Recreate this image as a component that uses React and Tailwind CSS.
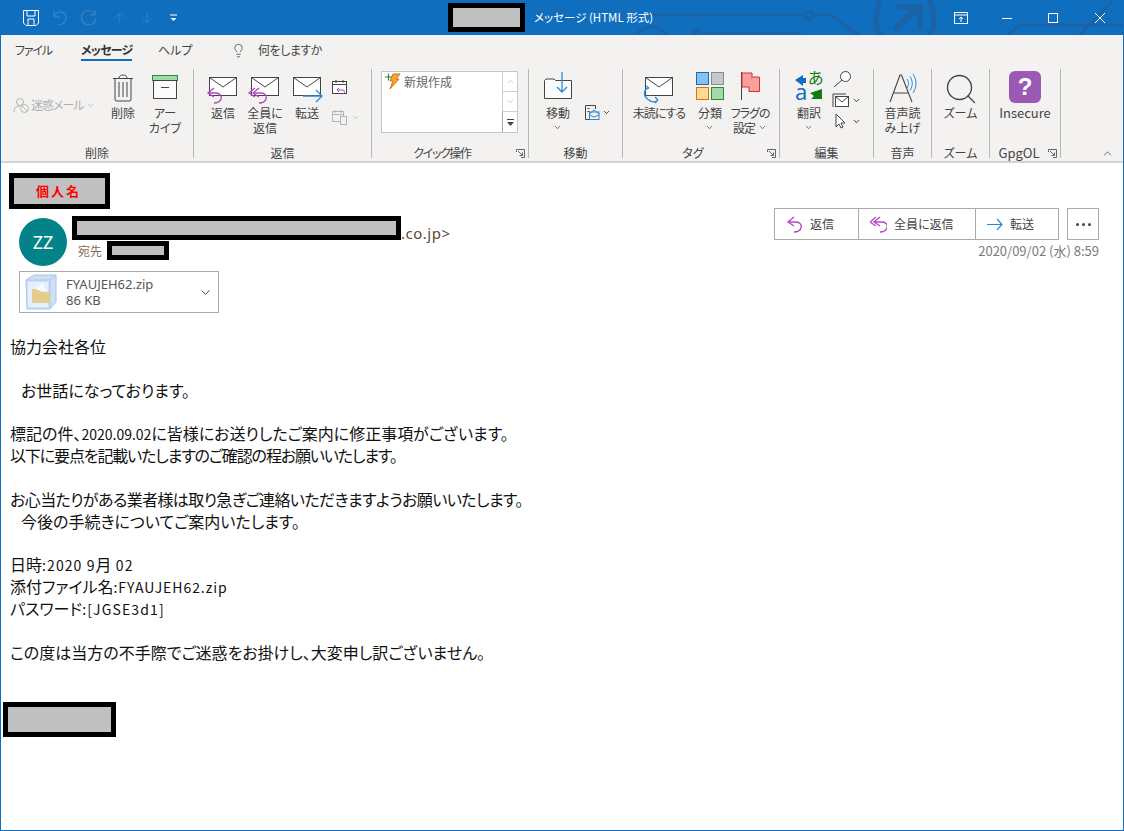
import { ChevronDown, ChevronUp, Lightbulb, Search, ArrowUp, ArrowDown } from "lucide-react"

const jp = "font-['Noto_Sans_CJK_JP','Noto_Sans',sans-serif]"

function Redacted({ className, children }) {
  return (
    <div className={"border-[5px] border-black bg-[#c0c0c0] flex items-center justify-center shrink-0 " + className}>
      {children}
    </div>
  )
}

function Arrow({ color, double, x = 0, y = 0 }) {
  return (
    <g transform={`translate(${x} ${y})`} fill="none" stroke={color} strokeWidth="1.3">
      <path d="M7 1 L1 6 L7 10" />
      {double && <path d="M3 1 L-3 6 L3 10" />}
      <path d="M1 6 H9 C13 6 15 9 14 12 C13 15 10 16 7 16" />
    </g>
  )
}

function MailIcon({ kind }) {
  return (
    <svg width="38" height="34" viewBox="0 0 38 34" fill="none">
      <rect x="5.5" y="7.5" width="27" height="18" fill="#fff" stroke="#444" />
      <path d="M5.5 7.5 L19 17 L32.5 7.5" stroke="#444" />
      {kind === "reply" && <Arrow color="#b146c2" x="3" y="17" />}
      {kind === "all" && <Arrow color="#b146c2" double x="6" y="17" />}
      {kind === "forward" && <path d="M15 26 H34 M28 20 L34 26 L28 32" stroke="#2b88d8" strokeWidth="1.3" />}
      {kind === "unread" && <path d="M9 30 C3 27 3 19 9 18 M9 18 L6 16 M9 30 C12 33 16 32 18 30 M18 30 L15 27 M18 30 L15 33" stroke="#2b88d8" strokeWidth="1.3" />}
    </svg>
  )
}

function Big({ w, icon, lines, chevron, textClass }) {
  return (
    <div className={"flex flex-col items-center shrink-0 " + w}>
      <div className="h-[36px] flex items-center justify-center">{icon}</div>
      <div className={"text-center leading-[15px] text-[#444] " + (textClass || "")}>
        {lines.map((l, i) => <div key={i} className="whitespace-nowrap flex items-center justify-center">{l}</div>)}
        {chevron && <ChevronDown size={9} strokeWidth={2} className="mx-auto mt-[3px]" />}
      </div>
    </div>
  )
}

function Group({ w, label, labelClass, launcher, children }) {
  return (
    <div className={"relative shrink-0 h-[89px] flex flex-col border-r border-[#b8b8b8] " + w}>
      <div className="flex-1 flex items-start">{children}</div>
      <div className={"h-[15px] text-center leading-[15px] text-[#444] mb-[-2px] " + (labelClass || "")}>{label}</div>
      {launcher && (
        <svg className="absolute right-[3px] bottom-[0px]" width="9" height="9" viewBox="0 0 9 9" fill="none" stroke="#666">
          <path d="M0.5 3 V0.5 H8.5 V8.5 H5" />
          <path d="M2 2 L6.5 6.5 M6.5 3.5 V6.5 H3.5" />
        </svg>
      )}
    </div>
  )
}

function TitleBar() {
  return (
    <div className="relative h-[35px] bg-[#106ebe] text-white flex items-center overflow-hidden shrink-0">
      <svg className="absolute inset-0" width="1124" height="35" fill="none" stroke="#1a63a6" strokeWidth="3">
        <path d="M650 15 H804 M813 15 H830 L862 38" />
        <circle cx="808" cy="15" r="4" />
        <circle cx="650" cy="45" r="18" />
        <circle cx="696" cy="33" r="3" />
        <path d="M699 33 H800" />
        <path d="M880 0 C873 14 873 25 880 36 M928 0 C935 14 935 25 928 36" strokeWidth="5" />
        <path d="M893 30 L917 8 M896 7 H919 V30" strokeWidth="6" />
        <path d="M1006 37 L1018 25 H1124 M1077 37 L1112 0" />
      </svg>
      <div className="relative flex items-center w-full h-full">
        <svg className="ml-[22px]" width="16" height="16" viewBox="0 0 16 16" fill="none" stroke="#fff">
          <path d="M0.5 0.5 H15.5 V13 L13 15.5 H3 L0.5 13 Z" />
          <path d="M4 1 V6 H12 V1 M5 15 V9 H11 V15" />
        </svg>
        <svg className="ml-[13px] text-[#3a86c8]" width="16" height="16" viewBox="0 0 16 16" fill="none" stroke="currentColor" strokeWidth="1.2">
          <path d="M2 1 V7 H8 M2 7 C4 1 12 0 14 6 C15 10 12 15 6 15" />
        </svg>
        <svg className="ml-[12px] text-[#3a86c8]" width="17" height="17" viewBox="0 0 17 17" fill="none" stroke="currentColor" strokeWidth="1.2">
          <path d="M15 1 V6 H10 M15 6 C12 0 4 0 2 6 C0 11 4 16 8.500 16 C13 16 16 13 16 9" />
        </svg>
        <ArrowUp size={16} className="ml-[14px] text-[#3a86c8]" strokeWidth={1.2} />
        <ArrowDown size={16} className="ml-[12px] text-[#3a86c8]" strokeWidth={1.2} />
        <svg className="ml-[14px]" width="10" height="10" viewBox="0 0 10 10" fill="#fff">
          <path d="M1 1.5 H8 V2.5 H1 Z M1.5 5 H7.5 L4.5 8 Z" />
        </svg>
        <Redacted className="ml-[269px] w-[77px] h-[29px]" />
        <span className="ml-[9px] w-[121px] whitespace-nowrap text-[11.5px]">メッセージ (HTML 形式)</span>
        <svg className="ml-[299px]" width="14" height="12" viewBox="0 0 14 12" fill="none" stroke="#fff">
          <rect x="0.5" y="0.5" width="13" height="11" />
          <path d="M1 3 H13 M7 10 V5 M5 7 L7 5 L9 7" />
        </svg>
        <svg className="ml-[34px]" width="10" height="10" viewBox="0 0 10 10" stroke="#fff"><path d="M0 5.500 H10" /></svg>
        <svg className="ml-[36px]" width="10" height="10" viewBox="0 0 10 10" fill="none" stroke="#fff"><rect x="0.5" y="0.5" width="9" height="9" /></svg>
        <svg className="ml-[36px]" width="12" height="12" viewBox="0 0 12 12" stroke="#fff"><path d="M1 1 L11 11 M11 1 L1 11" /></svg>
      </div>
    </div>
  )
}

function Tabs() {
  return (
    <div className="h-[30px] flex items-start pt-[7px] text-[12px] text-[#444] leading-[16px]">
      <span className="ml-[14px] w-[37px] tracking-[-1.2px] whitespace-nowrap">ファイル</span>
      <span className="ml-[29px] w-[51px] tracking-[-0.8px] whitespace-nowrap font-semibold text-[#333] border-b-[2px] border-[#106ebe] pb-[1px]">メッセージ</span>
      <span className="ml-[26px] w-[32px] whitespace-nowrap">ヘルプ</span>
      <Lightbulb size={15} strokeWidth={1.2} className="ml-[41px] mt-[1px]" />
      <span className="ml-[12px] tracking-[-0.5px]">何をしますか</span>
    </div>
  )
}

function Ribbon() {
  return (
    <div className="relative h-[98px] flex items-start pt-[4px] text-[12px] border-b-[2px] border-[#d4d4d4]">
      <Group w="w-[193px]" label="削除">
        <div className="w-[101px] flex items-center pl-[12px] mt-[27px] text-[#b0b0b0] whitespace-nowrap">
          <svg width="17" height="17" viewBox="0 0 17 17" fill="none" stroke="#b4b4b4">
            <circle cx="7" cy="5" r="3.5" />
            <path d="M1 15 C1 10 4 9 7 9" />
            <circle cx="11.5" cy="11.5" r="4" />
            <path d="M9 9 L14 14" />
          </svg>
          <span className="ml-[1px] w-[52px] tracking-[-1px]">迷惑メール</span>
          <ChevronDown size={9} className="ml-[3px]" />
        </div>
        <Big w="w-[42px]" lines={["削除"]} icon={
          <svg width="22" height="29" viewBox="0 0 22 29" fill="none" stroke="#444">
            <path d="M1 5.5 H21 M7 5 C7 1 15 1 15 5" />
            <path d="M3 5.5 V27 L4 28 H18 L19 27 V5.5 M7 9 V24 M11 9 V24 M15 9 V24" />
          </svg>
        } />
        <Big w="w-[42px]" lines={["アー", "カイブ"]} icon={
          <svg width="28" height="26" viewBox="0 0 28 26" fill="none">
            <rect x="1.5" y="1.5" width="25" height="5" fill="#a0dba8" stroke="#2b8a3e" />
            <rect x="2.5" y="6.5" width="23" height="18" fill="#fbfbfb" stroke="#444" />
            <path d="M10 13.5 H18" stroke="#444" />
          </svg>
        } />
      </Group>
      <Group w="w-[178px]" label="返信">
        <div className="flex pl-[8px]">
          <Big w="w-[42px]" lines={["返信"]} icon={<MailIcon kind="reply" />} />
          <Big w="w-[42px]" lines={["全員に", "返信"]} icon={<MailIcon kind="all" />} />
          <Big w="w-[42px]" lines={["転送"]} icon={<MailIcon kind="forward" />} />
          <div className="flex flex-col pl-[3px] pt-[10px] gap-[13px]">
            <svg width="17" height="17" viewBox="0 0 17 17" fill="none" stroke="#444">
              <rect x="1.5" y="2.5" width="14" height="12" fill="#fff" />
              <path d="M1.5 5.5 H15.500 M5 1 V4 M12 1 V4" />
              <path d="M8 9 L6 11 L8 13 M6 11 H12 C14 11 14 15 11 15" stroke="#b146c2" />
            </svg>
            <div className="flex items-center">
              <svg width="17" height="17" viewBox="0 0 17 17" fill="none" stroke="#b4b4b4">
                <rect x="1.5" y="2.5" width="11" height="10" />
                <path d="M1.5 5.5 H12.5 M4 1 V4 M10 1 V4" />
                <rect x="9.5" y="7.5" width="6" height="8" fill="#f3f2f1" />
              </svg>
              <ChevronDown size={9} className="ml-[3px] text-[#b0b0b0]" />
            </div>
          </div>
        </div>
      </Group>
      <Group w="w-[157px]" label="クイック操作" labelClass="pr-[16px] tracking-[-1.4px]" launcher>
        <div className="ml-[9px] mt-[2px] w-[137px] h-[62px] border border-[#c6c6c6] bg-white flex justify-between">
          <div className="flex items-start pt-[1px] pl-[3px] text-[12px] text-[#666]">
            <svg width="16" height="18" viewBox="0 0 16 18" fill="none" className="mt-[-1px]">
              <path d="M8 2 H15 L11 7 H14 L5 17 L8 9 H5 Z" fill="#f7a63a" stroke="#d9730d" />
              <path d="M0 5 H7 M3.5 1.5 V8.5" stroke="#2b8a3e" strokeWidth="1.2" />
            </svg>
            <span className="ml-[3px] leading-[17px]">新規作成</span>
          </div>
          <div className="w-[15px] flex flex-col text-[#bbb]">
            <div className="h-[20px] border-l border-b border-[#d0d0d0] flex items-center justify-center"><ChevronUp size={9} /></div>
            <div className="h-[20px] border-l border-b border-[#d0d0d0] flex items-center justify-center"><ChevronDown size={9} /></div>
            <div className="flex-1 border-l border-[#a8a8a8] flex flex-col items-center justify-center text-[#444]">
              <svg width="9" height="9" viewBox="0 0 9 9" fill="#444"><path d="M1 1 H8 V2 H1 Z M1 4 H8 L4.5 8 Z" /></svg>
            </div>
          </div>
        </div>
      </Group>
      <Group w="w-[94px]" label="移動">
        <div className="flex pl-[4px]">
          <Big w="w-[50px]" lines={["移動"]} chevron icon={
            <svg width="30" height="30" viewBox="0 0 30 30" fill="none" className="mt-[-2px]">
              <path d="M1.5 27.5 V9.5 L3 8 H11 L12.5 9.5 H28.5 V27.5 Z" fill="#fbfbfb" stroke="#444" />
              <path d="M19 1 V21 M14 16 L19 21 L24 16" stroke="#2b88d8" strokeWidth="1.3" />
            </svg>
          } />
          <div className="flex items-center mt-[24px] ml-[1px]">
            <svg width="16" height="17" viewBox="0 0 16 17" fill="none">
              <path d="M6 15.5 H1.5 V1.5 H11.5 V5" stroke="#444" />
              <path d="M3.5 4.5 H5.5 M3.5 7.5 H5.5" stroke="#444" />
              <rect x="5.5" y="8" width="9.5" height="7.5" stroke="#2b88d8" />
              <path d="M5.5 10 L10 6 L15 10 M5.5 11 L10 13 L15 11" stroke="#2b88d8" />
            </svg>
            <ChevronDown size={9} className="ml-[2px]" />
          </div>
        </div>
      </Group>
      <Group w="w-[157px]" label="タグ" labelClass="pr-[16px]" launcher>
        <Big w="w-[72px]" lines={["未読にする"]} textClass="tracking-[-1px]" icon={<MailIcon kind="unread" />} />
        <Big w="w-[30px]" lines={["分類"]} chevron icon={
          <div className="grid grid-cols-2 gap-[2px] mt-[-2px]">
            <div className="w-[13px] h-[13px] bg-[#8ac0ee] border border-[#106ebe]" />
            <div className="w-[13px] h-[13px] bg-[#c8c8c8] border border-[#8a8a8a]" />
            <div className="w-[13px] h-[13px] bg-[#fbdb95] border border-[#d9730d]" />
            <div className="w-[13px] h-[13px] bg-[#a0dba8] border border-[#2b8a3e]" />
          </div>
        } />
        <Big w="w-[50px]" lines={["フラグの", <>設定<ChevronDown key="c" size={9} strokeWidth={2} className="ml-[3px]" /></>]} textClass="tracking-[-1px]" icon={
          <svg width="22" height="30" viewBox="0 0 22 30" fill="none" className="mt-[-2px]">
            <path d="M2.5 1 V29" stroke="#444" />
            <path d="M3 2 H13 V16 H3 Z" fill="#f9a0a0" stroke="#d92c2c" />
            <path d="M13 6 H20.500 V20.500 H10 V16" fill="#f9a0a0" stroke="#d92c2c" />
          </svg>
        } />
      </Group>
      <Group w="w-[94px]" label="編集">
        <div className="flex pl-[8px]">
          <Big w="w-[42px]" lines={["翻訳"]} chevron icon={
            <div className="relative w-[28px] h-[30px] leading-none mt-[-2px]">
              <span className="absolute left-[13px] top-[-2px] text-[16px] text-[#107c10]">あ</span>
              <span className="absolute left-[0px] top-[9px] text-[22px] text-[#106ebe] font-['Noto_Sans']">a</span>
              <svg className="absolute inset-0" width="28" height="30" viewBox="0 0 28 30">
                <path d="M0 9 L8 4 L8 7 H11 V12 H8 V15 Z" fill="#106ebe" />
                <path d="M27 28 L16 28 L19 25 L15 22 L27 18 Z" fill="#107c10" />
              </svg>
            </div>
          } />
          <div className="flex flex-col pl-[2px] pt-[1px] gap-[5px]">
            <svg width="20" height="18" viewBox="0 0 20 18" fill="none" stroke="#444" className="ml-[1px]">
              <circle cx="12.5" cy="6.5" r="5" fill="#fff" />
              <path d="M9 10 L1 17" />
            </svg>
            <div className="flex items-center">
              <svg width="17" height="15" viewBox="0 0 17 15" fill="none" stroke="#444">
                <path d="M1 1 H14 M1 1 V14" />
                <rect x="3.5" y="3.5" width="13" height="10" fill="#fff" />
                <path d="M3.5 3.5 L10 9 L16.5 3.5" />
              </svg>
              <ChevronDown size={9} className="ml-[3px]" />
            </div>
            <div className="flex items-center">
              <svg width="14" height="17" viewBox="0 0 14 17" fill="none" stroke="#444" className="ml-[2px]">
                <path d="M2 1 V14 L5 11 L7 15 L9 14 L7 10 H11 Z" fill="#fff" />
              </svg>
              <ChevronDown size={9} className="ml-[4px]" />
            </div>
          </div>
        </div>
      </Group>
      <Group w="w-[58px]" label="音声">
        <Big w="w-[57px]" lines={["音声読", "み上げ"]} icon={
          <svg width="30" height="32" viewBox="0 0 30 32" fill="none" className="mt-[2px]">
            <path d="M2 30 L12 3 H13.5 L24 30 M6 21 H20" stroke="#444" strokeWidth="1.1" />
            <path d="M19 7 C21 10 21 13 19 16 M22 4.5 C25 9 25 14 22 18.5 M25 2 C29 8 29 15 25 21" stroke="#2b88d8" />
          </svg>
        } />
      </Group>
      <Group w="w-[58px]" label="ズーム">
        <Big w="w-[57px]" lines={["ズーム"]} icon={<Search size={36} strokeWidth={0.9} className="text-[#444] mt-[3px]" />} />
      </Group>
      <Group w="w-[71px]" label="GpgOL" labelClass="pr-[12px] text-[13px]" launcher>
        <Big w="w-[70px]" lines={["Insecure"]} textClass="text-[13px]" icon={
          <div className="w-[32px] h-[32px] rounded-[6px] bg-[#9b59b6] text-white text-[24px] font-bold flex items-center justify-center font-['Liberation_Sans']">?</div>
        } />
      </Group>
      <ChevronUp size={13} strokeWidth={1.4} className="absolute right-[9px] bottom-[1px] text-[#444]" />
    </div>
  )
}

function ActionButton({ w, icon, label, last }) {
  return (
    <div className={"h-full flex items-center pl-[11px] gap-[7px] text-[#444] " + w + (last ? "" : " border-r border-[#ababab]")}>
      {icon}
      <span>{label}</span>
    </div>
  )
}

function MessageHeader() {
  return (
    <div className="flex justify-between">
      <div className="pl-[8px] pt-[10px]">
        <Redacted className="w-[101px] h-[36px] text-[13px] font-bold text-[#ff0000] tracking-[2px] pb-[1px] pr-[2px]">個人名</Redacted>
        <div className="flex mt-[7px] ml-[10px]">
          <div className="w-[48px] h-[48px] mt-[2px] rounded-full bg-[#038387] text-white text-[18px] flex items-center justify-center font-['Noto_Sans']">ZZ</div>
          <div className="ml-[5px]">
            <div className="flex items-end">
              <Redacted className="w-[329px] h-[24px]" />
              <span className="text-[15px] tracking-[0.5px] leading-[16px] text-[#5c4a33] mb-[-1px] font-['Noto_Sans']">.co.jp&gt;</span>
            </div>
            <div className="flex items-center mt-[1px] ml-[6px] text-[12px] text-[#8a6d4f]">
              <span>宛先</span>
              <Redacted className="ml-[5px] w-[62px] h-[19px]" />
            </div>
          </div>
        </div>
        <div className="mt-[5px] ml-[10px] w-[200px] h-[42px] border border-[#ababab] flex items-center">
          <svg width="34" height="36" viewBox="0 0 34 36" className="ml-[4px] shrink-0" fill="none">
            <path d="M2 6 L10 1 H32 V28 L26 35 H3 Z" fill="#cfe0f5" stroke="#a9c4e6" />
            <path d="M2 6 H26 V35 M26 6 L32 1" stroke="#a9c4e6" />
            <path d="M4 8 H24 V33 H4 Z" fill="#e6f0fb" />
            <path d="M8 15 H15 L17 18 H26 V29 H8 Z" fill="#e3cd8f" />
            <path d="M12 16 L18 9 L23 17 Z" fill="#f8fbff" />
          </svg>
          <div className="ml-[8px] text-[13px] leading-[16px] text-[#555] flex-1 font-['Noto_Sans']">
            <div>FYAUJEH62.zip</div>
            <div>86 KB</div>
          </div>
          <ChevronDown size={15} strokeWidth={1.6} className="mr-[5px] text-[#444]" />
        </div>
      </div>
      <div className="pt-[45px] pr-[24px] flex flex-col items-end text-[12px]">
        <div className="flex">
          <div className="flex h-[32px] w-[285px] border border-[#ababab]">
            <ActionButton w="w-[84px]" label="返信" icon={
              <svg width="17" height="17" viewBox="0 0 17 17" fill="none"><Arrow color="#b146c2" x="1" y="0" /></svg>
            } />
            <ActionButton w="w-[117px]" label="全員に返信" icon={
              <svg width="17" height="17" viewBox="0 0 17 17" fill="none"><Arrow color="#b146c2" double x="3" y="0" /></svg>
            } />
            <ActionButton w="flex-1" last label="転送" icon={
              <svg width="16" height="13" viewBox="0 0 16 13" fill="none" stroke="#2b88d8" strokeWidth="1.2"><path d="M0 6.5 H15 M10 1 L15 6.5 L10 12" /></svg>
            } />
          </div>
          <div className="ml-[8px] w-[32px] h-[32px] border border-[#ababab] flex items-center justify-center gap-[3px]">
            <i className="w-[3px] h-[3px] rounded-full bg-[#444]" />
            <i className="w-[3px] h-[3px] rounded-full bg-[#444]" />
            <i className="w-[3px] h-[3px] rounded-full bg-[#444]" />
          </div>
        </div>
        <div className="mt-[3px] text-[13px] text-[#7a7a7a] leading-[16px]">2020/09/02 (水) 8:59</div>
      </div>
    </div>
  )
}

function Line({ className, children }) {
  return <p className={"h-[21.85px] whitespace-pre " + (className || "")}>{children}</p>
}

function Small({ className, children }) {
  return <span className={"text-[14px] " + (className || "")}>{children}</span>
}

export default function App() {
  return (
    <div className={"w-[1124px] h-[831px] overflow-hidden flex flex-col border-x border-b border-[#106ebe] bg-white [font-feature-settings:'palt'] " + jp}>
      <TitleBar />
      <div className="bg-[#f3f2f1] shrink-0">
        <Tabs />
        <Ribbon />
      </div>
      <MessageHeader />
      <div className="mt-[23px] ml-[9px] text-[16px] leading-[21.85px] text-[#111]">
        <Line>協力会社各位</Line>
        <Line />
        <Line className="pl-[11px]">お世話になっております。</Line>
        <Line />
        <Line>標記の件、<Small>2020.09.02</Small>に皆様にお送りしたご案内に修正事項がございます。</Line>
        <Line className="tracking-[-1.13px]">以下に要点を記載いたしますのご確認の程お願いいたします。</Line>
        <Line />
        <Line className="tracking-[-0.6px]">お心当たりがある業者様は取り急ぎご連絡いただきますようお願いいたします。</Line>
        <Line className="pl-[11px]">今後の手続きについてご案内いたします。</Line>
        <Line />
        <Line>日時<Small className="tracking-[1.1px]">:2020 9</Small>月<Small className="tracking-[1.1px]"> 02</Small></Line>
        <Line>添付ファイル名<Small className="tracking-[0.95px]">:FYAUJEH62.zip</Small></Line>
        <Line>パスワード<Small className="tracking-[1.15px]">:[JGSE3d1]</Small></Line>
        <Line />
        <Line>この度は当方の不手際でご迷惑をお掛けし、大変申し訳ございません。</Line>
      </div>
      <Redacted className="mt-[38px] ml-[2px] w-[113px] h-[35px]" />
    </div>
  )
}
